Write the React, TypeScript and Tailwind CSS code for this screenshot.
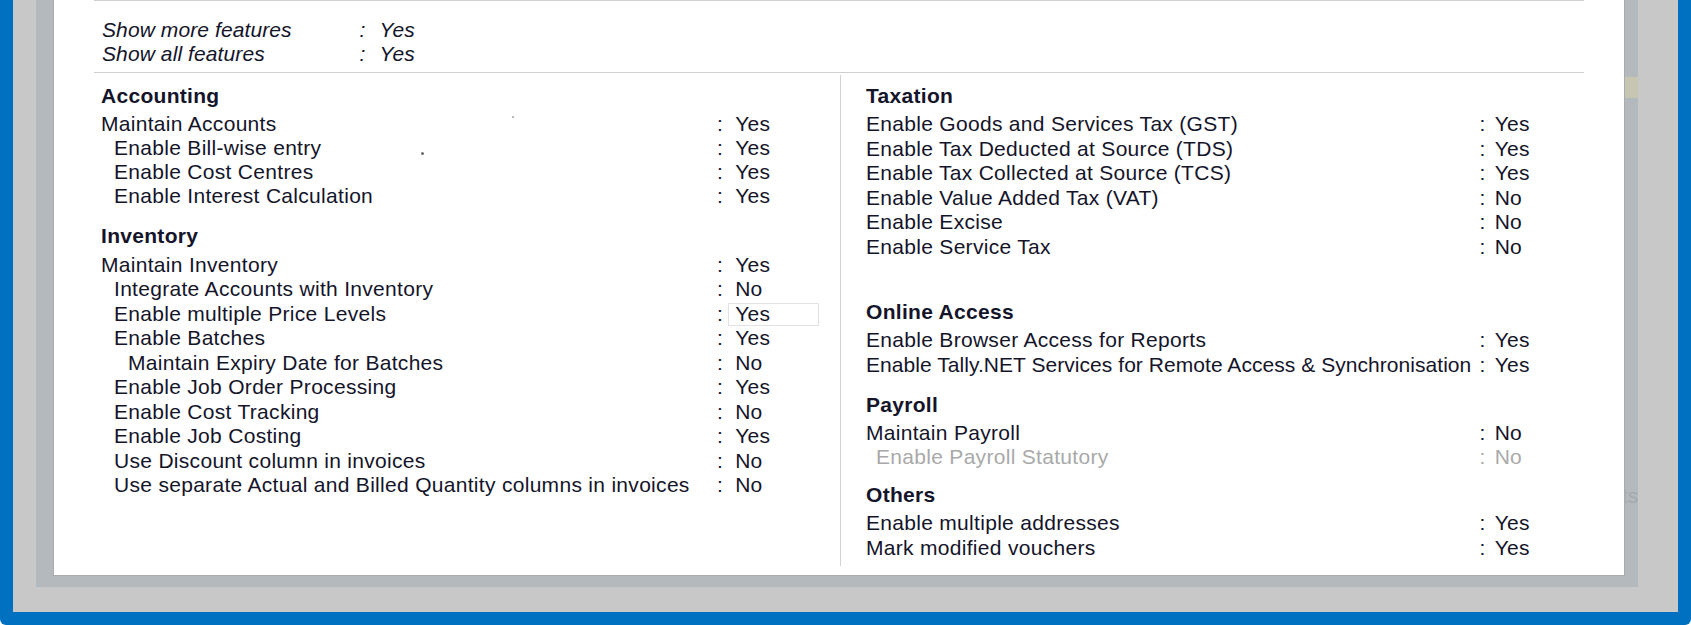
import React from 'react';

type Row = {
  label: string;
  value: string;
  indent?: 0 | 1 | 2;
  dim?: boolean;
  focus?: boolean;
  tight?: boolean;
};

type Section = {
  title: string;
  mt: string;
  rowH: string;
  rows: Row[];
};

const leftSections: Section[] = [
  {
    title: 'Accounting',
    mt: 'mt-0',
    rowH: 'h-[24px]',
    rows: [
      { label: 'Maintain Accounts', value: 'Yes' },
      { label: 'Enable Bill-wise entry', value: 'Yes', indent: 1 },
      { label: 'Enable Cost Centres', value: 'Yes', indent: 1 },
      { label: 'Enable Interest Calculation', value: 'Yes', indent: 1 },
    ],
  },
  {
    title: 'Inventory',
    mt: 'mt-[16px]',
    rowH: 'h-[24.5px]',
    rows: [
      { label: 'Maintain Inventory', value: 'Yes' },
      { label: 'Integrate Accounts with Inventory', value: 'No', indent: 1 },
      { label: 'Enable multiple Price Levels', value: 'Yes', indent: 1, focus: true },
      { label: 'Enable Batches', value: 'Yes', indent: 1 },
      { label: 'Maintain Expiry Date for Batches', value: 'No', indent: 2 },
      { label: 'Enable Job Order Processing', value: 'Yes', indent: 1 },
      { label: 'Enable Cost Tracking', value: 'No', indent: 1 },
      { label: 'Enable Job Costing', value: 'Yes', indent: 1 },
      { label: 'Use Discount column in invoices', value: 'No', indent: 1 },
      { label: 'Use separate Actual and Billed Quantity columns in invoices', value: 'No', indent: 1 },
    ],
  },
];

const rightSections: Section[] = [
  {
    title: 'Taxation',
    mt: 'mt-0',
    rowH: 'h-[24.5px]',
    rows: [
      { label: 'Enable Goods and Services Tax (GST)', value: 'Yes' },
      { label: 'Enable Tax Deducted at Source (TDS)', value: 'Yes' },
      { label: 'Enable Tax Collected at Source (TCS)', value: 'Yes' },
      { label: 'Enable Value Added Tax (VAT)', value: 'No' },
      { label: 'Enable Excise', value: 'No' },
      { label: 'Enable Service Tax', value: 'No' },
    ],
  },
  {
    title: 'Online Access',
    mt: 'mt-[40.5px]',
    rowH: 'h-[24.5px]',
    rows: [
      { label: 'Enable Browser Access for Reports', value: 'Yes' },
      { label: 'Enable Tally.NET Services for Remote Access & Synchronisation', value: 'Yes', tight: true },
    ],
  },
  {
    title: 'Payroll',
    mt: 'mt-[16px]',
    rowH: 'h-[23.5px]',
    rows: [
      { label: 'Maintain Payroll', value: 'No' },
      { label: 'Enable Payroll Statutory', value: 'No', indent: 1, dim: true },
    ],
  },
  {
    title: 'Others',
    mt: 'mt-[14px]',
    rowH: 'h-[24.5px]',
    rows: [
      { label: 'Enable multiple addresses', value: 'Yes' },
      { label: 'Mark modified vouchers', value: 'Yes' },
    ],
  },
];

function SectionBlock({ section, side }: { section: Section; side: 'left' | 'right' }) {
  const labelW = side === 'left' ? 'w-[616px]' : 'w-[613.5px]';
  const valueGap = side === 'left' ? 'ml-[5px] pl-[6px]' : 'ml-[3px] pl-[5px]';
  const indent1 = side === 'left' ? 'pl-[13px]' : 'pl-[10px]';

  return (
    <div className={section.mt}>
      <div className="h-[24.5px] mb-[4px] flex items-center font-bold leading-[24.5px]">
        {section.title}
      </div>
      {section.rows.map(row => (
        <div
          key={row.label}
          className={`${section.rowH} flex items-center whitespace-nowrap ${row.dim ? 'text-[#a9a9a9]' : ''}`}
        >
          <span
            className={`${labelW} shrink-0 ${row.tight ? 'tracking-[0.05px]' : ''} ${
              row.indent === 2 ? 'pl-[27px]' : row.indent === 1 ? indent1 : ''
            }`}
          >
            {row.label}
          </span>
          <span>:</span>
          <span
            className={`${valueGap} w-[91px] h-[23px] flex items-center border ${
              row.focus ? 'border-[#e2e2e2]' : 'border-transparent'
            }`}
          >
            {row.value}
          </span>
        </div>
      ))}
    </div>
  );
}

export default function App() {
  return (
    <div className="w-[1691px] h-[625px] bg-white">
      <div
        className="w-full h-full bg-[#0070c0] rounded-b-[6px] px-[13px] pb-[13px] flex"
        style={{ fontFamily: '"Liberation Sans", Arial, sans-serif' }}
      >
        <div className="flex-1 bg-[#c8c8c8] pl-[23px] pr-[40px] pb-[25px] flex">
          <div className="flex-1 bg-[#b4b9bd] pl-[17px] pb-[11px] flex">
            {/* main white panel */}
            <div className="relative flex-1 bg-white border-l border-r border-b border-[#a9abad] flex flex-col text-[21px] text-[#14142a] leading-[24px] tracking-[0.3px]">
              <div className="mx-[40px] flex flex-col">
                <div className="h-px bg-[#cfcfcf]" />

                <div className="pt-[17px] pl-[8px] italic tracking-[0.1px]">
                  {[
                    ['Show more features', 'Yes'],
                    ['Show all features', 'Yes'],
                  ].map(([label, value]) => (
                    <div key={label} className="h-[24px] flex items-center whitespace-nowrap">
                      <span className="w-[257.5px] shrink-0">{label}</span>
                      <span>:</span>
                      <span className="ml-[14px]">{value}</span>
                    </div>
                  ))}
                </div>

                <div className="h-px bg-[#cfcfcf] mt-[6px]" />

                <div className="mt-[2px] h-[491px] flex">
                  <div className="w-[747px] shrink-0 border-r border-[#d2d2d2] pl-[7px] pt-[8.75px] leading-[24.5px]">
                    {leftSections.map(s => (
                      <SectionBlock key={s.title} section={s} side="left" />
                    ))}
                  </div>
                  <div className="flex-1 pl-[25px] pt-[8.75px] leading-[24.5px]">
                    {rightSections.map(s => (
                      <SectionBlock key={s.title} section={s} side="right" />
                    ))}
                  </div>
                </div>
              </div>

              {/* specks on the screen */}
              <span className="absolute left-[458px] top-[116px] w-[2px] h-[2px] rounded-full bg-[#a0a0a0]" />
              <span className="absolute left-[367px] top-[152px] w-[3px] h-[3px] rounded-full bg-[#6a6a6a]" />
            </div>

            {/* window behind, right edge */}
            <div className="w-[13px] shrink-0 overflow-hidden flex flex-col">
              <div className="h-[77px]" />
              <div className="h-[21px] bg-[#c6c6b3]" />
              <div className="mt-[386px] -ml-[3px] text-[21px] leading-[24px] text-[#a4a9ae] whitespace-nowrap">
                ts
              </div>
            </div>
          </div>
        </div>
      </div>
    </div>
  );
}
